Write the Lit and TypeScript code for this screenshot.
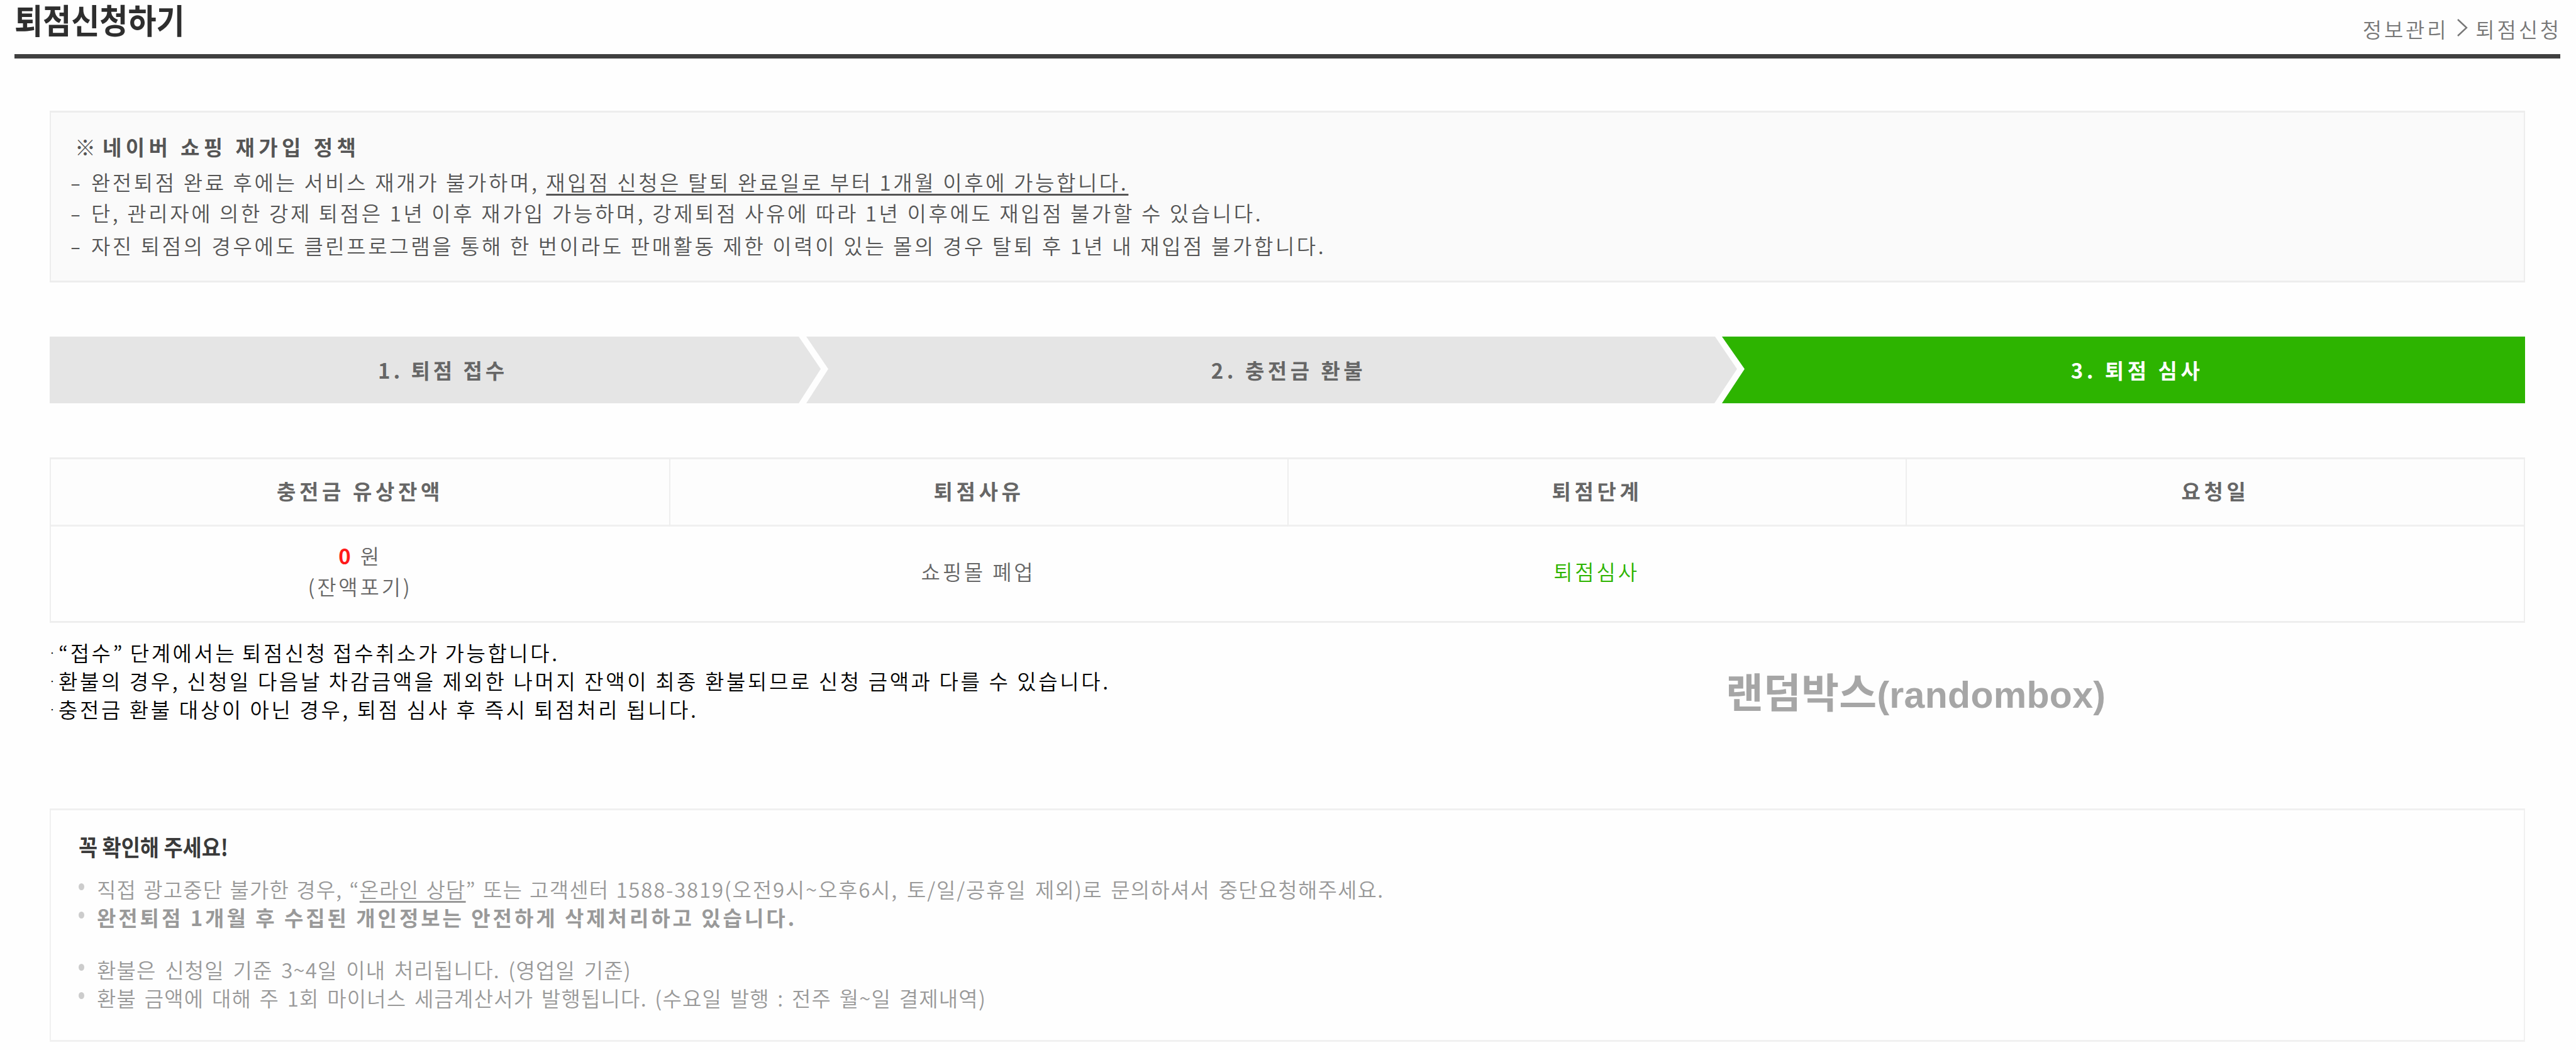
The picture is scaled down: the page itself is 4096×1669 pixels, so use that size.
import { LitElement, css, html } from "lit";
import { customElement } from "lit/decorators.js";

@customElement("app-root")
export class AppRoot extends LitElement {
  static styles = css`
    :host {
      display: block;
      box-sizing: border-box;
      width: 4096px;
      height: 1669px;
      background-color: #fefefe;
      color: #666;
      font-family: "Noto Sans CJK KR", sans-serif;
      font-size: 33px;
      font-weight: 350;
      letter-spacing: 3.8px;
      white-space: nowrap;
    }
    * {
      box-sizing: border-box;
    }
    p,
    h1,
    h2,
    ul {
      margin: 0;
      padding: 0;
      list-style: none;
    }
    u {
      text-decoration-thickness: 3px;
      text-underline-offset: 5px;
      text-decoration-skip-ink: none;
    }
    .header {
      display: flex;
      justify-content: space-between;
      height: 93px;
      margin: 0 25px 0 23px;
      border-bottom: 7px solid #404040;
    }
    .title {
      color: #2e2e2e;
      font-size: 54px;
      font-weight: 700;
      line-height: 62px;
      letter-spacing: 0;
      transform: scaleX(0.908);
      transform-origin: left;
    }
    .path {
      display: flex;
      margin-right: -2px;
      color: #777;
      line-height: 93px;
    }
    .arrow {
      width: 18px;
      height: 30px;
      margin: 29px 12px 0 13px;
      fill: none;
      stroke: #777;
      stroke-width: 2.4;
    }
    .content {
      padding: 83px 81px 0 79px;
    }
    .policy {
      height: 273px;
      padding: 29px 0 0 38px;
      border: solid #ededed;
      border-width: 3px 2px;
      background-color: #fafafa;
      color: #555;
      line-height: 49px;
      letter-spacing: 3.6px;
    }
    .policy-title {
      margin-bottom: 7px;
      padding-left: 0;
      font-size: 33px;
      font-weight: 700;
      line-height: 50px;
      letter-spacing: 6.4px;
    }
    .sign {
      letter-spacing: -3px;
    }
    .dash {
      display: inline-block;
      transform: scaleX(1.5);
      transform-origin: right;
    }
    .policy-last {
      margin-top: 3px;
    }
    .steps {
      display: flex;
      height: 106px;
      margin: 86px 0;
      line-height: 106px;
    }
    .step {
      padding-left: 28px;
      background-color: #e5e5e5;
      font-weight: 700;
      letter-spacing: 5.5px;
      text-align: center;
    }
    .first {
      width: 1226px;
      padding-left: 24px;
      letter-spacing: 4.9px;
      clip-path: polygon(0 0, calc(100% - 35px) 0, 100% 48.5%, calc(100% - 35px) 100%, 0 100%);
    }
    .second {
      width: 1480px;
      margin-left: -23px;
      padding-left: 54px;
      clip-path: polygon(0 0, calc(100% - 35px) 0, 100% 48.5%, calc(100% - 36px) 100%, 0 100%, 35px 48.5%);
    }
    .third {
      flex: 1;
      margin-left: -24px;
      padding-left: 43px;
      background-color: #2db400;
      color: #fff;
      clip-path: polygon(0 0, 100% 0, 100% 100%, 0 100%, 36px 48.5%);
    }
    .table {
      display: grid;
      grid-template-columns: repeat(4, 1fr);
      grid-template-rows: 107px 150px;
      height: 263px;
      border: solid #eee;
      border-width: 3px 2px;
      text-align: center;
    }
    .th {
      border-bottom: 3px solid #f0f0f0;
      background-color: #fdfdfd;
      font-weight: 700;
      line-height: 101px;
      letter-spacing: 5.6px;
    }
    .th + .th {
      border-left: 2px solid #eee;
    }
    .td {
      display: flex;
      flex-direction: column;
      justify-content: center;
      padding-bottom: 8px;
      line-height: 49px;
    }
    .amount {
      color: #ff1a1a;
      font-weight: 700;
    }
    .green {
      color: #2db400;
    }
    .notes {
      display: grid;
      grid-template-columns: 2665px auto;
      height: 295px;
      padding-top: 25px;
      color: #000;
      line-height: 45px;
      letter-spacing: 3.6px;
    }
    .note {
      display: flex;
    }
    .note:first-child {
      word-spacing: -2.5px;
    }
    .dot {
      width: 15px;
      margin-left: -1px;
      font-size: 18px;
      letter-spacing: 0;
    }
    .mark {
      padding-top: 60px;
      color: #a6a6a6;
      font-family: "Liberation Sans", "Noto Sans CJK KR", sans-serif;
      font-size: 59px;
      font-weight: 700;
      letter-spacing: 0.3px;
    }
    .mark-ko {
      font-family: "Noto Sans CJK KR", sans-serif;
      font-size: 65px;
    }
    .confirm {
      height: 371px;
      padding: 35px 0 0 44px;
      border: solid #f0f0f0;
      border-width: 3px 2px;
      color: #999;
      line-height: 45px;
    }
    .confirm-title {
      width: 300px;
      margin-bottom: 24px;
      color: #3a3a3a;
      font-size: 36px;
      font-weight: 700;
      line-height: 44px;
      letter-spacing: 0;
      transform: scaleX(0.91);
      transform-origin: left;
    }
    .item {
      display: flex;
      letter-spacing: 1.2px;
      word-spacing: 5px;
    }
    .item::before {
      content: "";
      width: 9px;
      height: 11px;
      margin: 13px 20px 0 0;
      border-radius: 50%;
      background-color: #ccc;
    }
    .item-bold {
      font-weight: 700;
      letter-spacing: 3.95px;
      word-spacing: 0;
    }
    .item-gap {
      margin-top: 38px;
    }
    .near {
      word-spacing: 2.5px;
    }
    .wide {
      letter-spacing: 1.8px;
    }
    .tight {
      word-spacing: 4px;
    }
  `;

  render() {
    return html`
      <header class="header">
        <h1 class="title">퇴점신청하기</h1>
        <div class="path">
          <span>정보관리</span>
          <svg class="arrow" viewBox="0 0 18 30"><path d="M2 2L16 15L2 28" /></svg>
          <span>퇴점신청</span>
        </div>
      </header>
      <main class="content">
        <section class="policy">
          <h2 class="policy-title"><span class="sign">※</span> 네이버 쇼핑 재가입 정책</h2>
          <p><span class="dash">-</span> 완전퇴점 완료 후에는 서비스 재개가 불가하며, <u>재입점 신청은 탈퇴 완료일로 부터 1개월 이후에 가능합니다.</u></p>
          <p><span class="dash">-</span> 단, 관리자에 의한 강제 퇴점은 1년 이후 재가입 가능하며, 강제퇴점 사유에 따라 1년 이후에도 재입점 불가할 수 있습니다.</p>
          <p class="policy-last"><span class="dash">-</span> 자진 퇴점의 경우에도 클린프로그램을 통해 한 번이라도 판매활동 제한 이력이 있는 몰의 경우 탈퇴 후 1년 내 재입점 불가합니다.</p>
        </section>
        <div class="steps">
          <div class="step first">1. 퇴점 접수</div>
          <div class="step second">2. 충전금 환불</div>
          <div class="step third">3. 퇴점 심사</div>
        </div>
        <div class="table">
          <div class="th">충전금 유상잔액</div>
          <div class="th">퇴점사유</div>
          <div class="th">퇴점단계</div>
          <div class="th">요청일</div>
          <div class="td">
            <div><span class="amount">0</span> 원</div>
            <div>(잔액포기)</div>
          </div>
          <div class="td">쇼핑몰 폐업</div>
          <div class="td green">퇴점심사</div>
          <div class="td"></div>
        </div>
        <div class="notes">
          <ul>
            <li class="note"><span class="dot">·</span>“접수” 단계에서는 퇴점신청 접수취소가 가능합니다.</li>
            <li class="note"><span class="dot">·</span>환불의 경우, 신청일 다음날 차감금액을 제외한 나머지 잔액이 최종 환불되므로 신청 금액과 다를 수 있습니다.</li>
            <li class="note"><span class="dot">·</span>충전금 환불 대상이 아닌 경우, 퇴점 심사 후 즉시 퇴점처리 됩니다.</li>
          </ul>
          <div class="mark"><span class="mark-ko">랜덤박스</span>(randombox)</div>
        </div>
        <section class="confirm">
          <h2 class="confirm-title">꼭 확인해 주세요!</h2>
          <ul>
            <li class="item">
              <p><span class="near">직접 광고중단 불가한 경우, “<u>온라인 상담</u>” 또는 고객센터 </span><span class="wide">1588-3819(오전9시~오후6시, 토/일/공휴일</span> 제외)로 문의하셔서 중단요청해주세요.</p>
            </li>
            <li class="item item-bold"><p>완전퇴점 1개월 후 수집된 개인정보는 안전하게 삭제처리하고 있습니다.</p></li>
            <li class="item item-gap"><p>환불은 신청일 기준 3~4일 이내 처리됩니다. (영업일 기준)</p></li>
            <li class="item tight"><p>환불 금액에 대해 주 1회 마이너스 세금계산서가 발행됩니다. (수요일 발행 : 전주 월~일 결제내역)</p></li>
          </ul>
        </section>
      </main>
    `;
  }
}
